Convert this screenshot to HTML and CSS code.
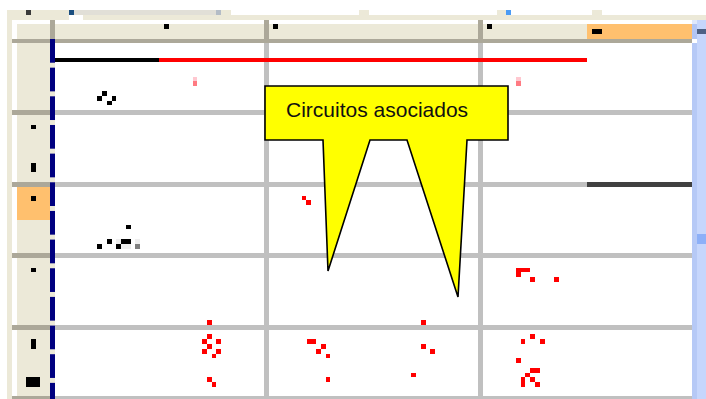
FILE: index.html
```html
<!DOCTYPE html>
<html lang="es">

<head>
    <meta charset="UTF-8">
    <meta name="viewport" content="width=device-width, initial-scale=1.0">
    <title>Circuitos asociados</title>
    <link rel="stylesheet" href="styles.css">
</head>

<body>
    <div class="tabs">
        <div class="tab-row upper">
            <span></span>
            <span class="beige"></span>
            <span class="dark"></span>
            <span class="beige"></span>
            <span class="blue"></span>
            <span class="field"></span>
            <span class="steel"></span>
            <span class="beige"></span>
            <span></span>
            <span class="beige"></span>
            <span></span>
            <span class="beige"></span>
            <span class="sky"></span>
            <span></span>
            <span class="beige"></span>
            <span></span>
        </div>
        <div class="tab-row lower">
            <span></span>
            <span class="beige"></span>
            <span></span>
            <span class="beige"></span>
        </div>
    </div>

    <div class="main">
        <div class="edge"></div>

        <div class="sheet">
            <div class="corner"></div>
            <div class="divider"></div>
            <div class="colhead"></div>
            <div class="colhead"></div>
            <div class="colhead last"><span class="selected"></span></div>

            <div class="rowhead"></div>
            <div class="cell"></div>
            <div class="cell"></div>
            <div class="cell last"></div>

            <div class="rowhead"></div>
            <div class="cell"></div>
            <div class="cell"></div>
            <div class="cell last"></div>

            <div class="rowhead active"></div>
            <div class="cell"></div>
            <div class="cell"></div>
            <div class="cell last"></div>

            <div class="rowhead"></div>
            <div class="cell"></div>
            <div class="cell"></div>
            <div class="cell last"></div>

            <div class="rowhead"></div>
            <div class="cell"></div>
            <div class="cell"></div>
            <div class="cell last"></div>
        </div>

        <div class="scroll">
            <div class="scroll-cap"></div>
            <div class="scroll-btn"><span class="scroll-arrow"></span></div>
            <div class="scroll-gap"></div>
            <div class="scroll-thumb"></div>
        </div>
    </div>

    <!-- plotted marks and the callout, drawn over the sheet -->
    <svg class="marks" width="706" height="399" viewBox="0 0 706 399">
        <g class="ink">
            <!-- column header marks -->
            <rect x="164" y="24" width="5" height="5" />
            <rect x="273" y="24" width="5" height="5" />
            <rect x="487" y="24" width="5" height="5" />
            <rect x="592" y="29" width="10" height="5" />

            <!-- row header marks -->
            <rect x="31" y="125" width="5" height="4" />
            <rect x="31" y="163" width="5" height="9" />
            <rect x="31" y="196" width="5" height="5" />
            <rect x="31" y="268" width="5" height="4" />
            <rect x="31" y="339" width="5" height="10" />
            <rect x="26" y="377" width="14" height="10" />

            <!-- trace -->
            <rect x="55" y="58" width="104" height="4" />

            <!-- black points -->
            <rect x="102" y="91" width="5" height="5" />
            <rect x="97" y="96" width="5" height="5" />
            <rect x="112" y="96" width="4" height="5" />
            <rect x="107" y="101" width="5" height="4" />

            <rect x="126" y="225" width="5" height="4" />
            <rect x="107" y="239" width="5" height="5" />
            <rect x="121" y="239" width="10" height="5" />
            <rect x="97" y="244" width="5" height="5" />
            <rect x="116" y="244" width="5" height="5" />
        </g>

        <g class="faint">
            <rect x="116" y="239" width="5" height="5" />
            <rect x="121" y="244" width="10" height="5" />
            <rect x="135" y="239" width="5" height="5" />
        </g>
        <rect class="mid" x="135" y="244" width="5" height="5" />

        <rect class="dim" x="587" y="182" width="105" height="5" />

        <g class="pink">
            <rect x="193" y="77" width="4" height="4" />
            <rect x="516" y="77" width="5" height="4" />
        </g>
        <g class="rose">
            <rect x="193" y="81" width="4" height="5" />
            <rect x="516" y="81" width="5" height="5" />
        </g>

        <g class="red">
            <rect x="159" y="58" width="428" height="4" />

            <rect x="207" y="320" width="5" height="5" />
            <rect x="207" y="334" width="5" height="5" />
            <rect x="202" y="339" width="5" height="5" />
            <rect x="216" y="339" width="5" height="5" />
            <rect x="207" y="344" width="5" height="5" />
            <rect x="202" y="349" width="5" height="5" />
            <rect x="216" y="349" width="5" height="5" />
            <rect x="212" y="354" width="4" height="4" />
            <rect x="207" y="377" width="5" height="5" />
            <rect x="212" y="382" width="4" height="5" />

            <rect x="302" y="196" width="4" height="4" />
            <rect x="306" y="200" width="5" height="5" />
            <rect x="307" y="339" width="9" height="5" />
            <rect x="321" y="344" width="5" height="5" />
            <rect x="316" y="349" width="5" height="5" />
            <rect x="326" y="354" width="4" height="4" />
            <rect x="326" y="377" width="4" height="5" />
            <rect x="421" y="320" width="5" height="5" />
            <rect x="421" y="344" width="5" height="5" />
            <rect x="430" y="349" width="5" height="5" />
            <rect x="411" y="373" width="5" height="4" />

            <rect x="516" y="268" width="14" height="4" />
            <rect x="516" y="272" width="5" height="5" />
            <rect x="530" y="277" width="5" height="5" />
            <rect x="554" y="277" width="5" height="5" />
            <rect x="530" y="334" width="5" height="5" />
            <rect x="521" y="339" width="4" height="5" />
            <rect x="540" y="339" width="5" height="5" />
            <rect x="516" y="358" width="5" height="5" />
            <rect x="530" y="368" width="10" height="5" />
            <rect x="525" y="373" width="5" height="4" />
            <rect x="521" y="377" width="4" height="10" />
            <rect x="530" y="377" width="5" height="5" />
            <rect x="535" y="382" width="5" height="5" />
        </g>

        <path class="callout" d="M265 86 L508 86 L508 140 L467 140 L458 297 L407 140 L370 140 L328 271 L323 140 L265 140 Z" />
        <text class="callout-text" x="286" y="117">Circuitos asociados</text>
    </svg>
</body>

</html>
```

FILE: styles.css
```css
body {
    margin: 0;
    padding: 0;
    width: 706px;
    height: 399px;
    overflow: hidden;
    position: relative;
    background-color: #fff;
    font-family: 'Liberation Sans', Arial, sans-serif;
}

/* tab strip at the top */
.tabs {
    height: 20px;
    padding-top: 10px;
    box-sizing: border-box;
}

.tab-row {
    display: grid;
    height: 5px;
}

.tab-row.upper {
    grid-template-columns: 7px 19px 5px 38px 5px 142px 5px 10px 128px 10px 128px 9px 5px 81px 10px 1fr;
}

.tab-row.lower {
    grid-template-columns: 7px 62px 14px 1fr;
}

.beige {
    background-color: #ece9d8;
}

.dark {
    background-color: #3a3a3a;
}

.blue {
    background-color: #1b4f80;
}

.field {
    background-color: #e1dfd7;
}

.steel {
    background-color: #b4bcc6;
}

.sky {
    background-color: #4a9bf5;
}

/* sheet area */
.main {
    display: flex;
    height: 379px;
    padding-left: 7px;
    overflow: hidden;
}

.edge {
    width: 5px;
    flex-shrink: 0;
    background-color: #ece9d8;
}

.sheet {
    display: grid;
    grid-template-columns: 38px 5px 214px 214px 209px;
    grid-template-rows: 23px 72px 72px 71px 72px 71px;
    flex-shrink: 0;
}

.sheet > div {
    box-sizing: border-box;
}

.corner {
    background: linear-gradient(#ece9d8, #ece9d8) 5px 4px / 33px 15px no-repeat, #fff;
    border-bottom: 4px solid #aca899;
}

.divider {
    grid-column: 2;
    grid-row: 1 / -1;
    background:
        linear-gradient(#aca899, #aca899) 0 0 / 100% 19px no-repeat,
        linear-gradient(#000080 23.8px, #ece9d8 23.8px) 0 19px / 100% 28.67px repeat-y;
}

.colhead {
    display: flex;
    background: linear-gradient(#fff 4px, #ece9d8 4px);
    border-right: 5px solid #aca899;
    border-bottom: 4px solid #aca899;
}

.colhead.last {
    border-right: none;
}

.selected {
    width: 105px;
    height: 15px;
    margin-top: 4px;
    margin-left: auto;
    background-color: #ffc06e;
}

.rowhead {
    background: linear-gradient(to right, #fff 5px, #ece9d8 5px);
    border-bottom: 5px solid #aca899;
}

.rowhead.active {
    background:
        linear-gradient(#ffc06e, #ffc06e) 5px 0 / 33px 33px no-repeat,
        linear-gradient(to right, #fff 5px, #ece9d8 5px);
}

.cell {
    background-color: #fff;
    border-right: 5px solid #c0c0c0;
    border-bottom: 5px solid #c0c0c0;
}

.cell.last {
    border-right: none;
}

/* scrollbar */
.scroll {
    width: 14px;
    flex-shrink: 0;
    display: flex;
    flex-direction: column;
    background: linear-gradient(to right, #b6c9f6 5px, #c6d6fc 5px);
}

.scroll-cap {
    height: 4px;
    background: linear-gradient(to right, #e0e8fb 5px, #c6d6fc 5px);
}

.scroll-btn {
    height: 15px;
    padding: 5px 0 0 5px;
    box-sizing: border-box;
    background: linear-gradient(to right, #b2c5f4 5px, #c6d6fc 5px);
}

.scroll-arrow {
    display: block;
    width: 9px;
    height: 5px;
    background-color: #4d6185;
}

.scroll-gap {
    height: 4px;
    background: linear-gradient(to right, #fff 5px, #c6d6fc 5px);
}

.scroll-thumb {
    width: 9px;
    height: 10px;
    margin: 191px 0 0 5px;
    background-color: #8db0f8;
}

/* overlay */
.marks {
    position: absolute;
    top: 0;
    left: 0;
    pointer-events: none;
    shape-rendering: crispEdges;
}

.ink {
    fill: #000;
}

.faint {
    fill: #eeeeee;
}

.mid {
    fill: #808080;
}

.dim {
    fill: #404040;
}

.pink {
    fill: #ffc8d0;
}

.rose {
    fill: #ff7a82;
}

.red {
    fill: #ff0000;
}

.callout {
    fill: #ffff00;
    stroke: #000;
    stroke-width: 1.6;
    stroke-linejoin: miter;
    shape-rendering: geometricPrecision;
}

.callout-text {
    font-family: 'Liberation Sans', Arial, sans-serif;
    font-size: 21px;
    fill: #111;
}
```
